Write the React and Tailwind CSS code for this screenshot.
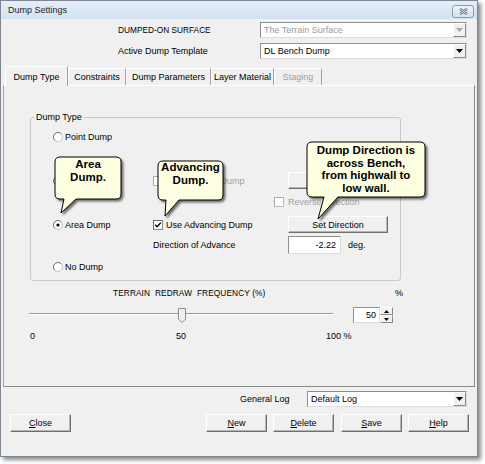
// App.jsx
import React from 'react';

const Radio = ({ checked }) => (
    <svg width="10" height="10" viewBox="0 0 10 10" className="shrink-0">
        <circle cx="5" cy="5" r="4.5" fill="#fff" stroke="#c4c4c4" />
        <path d="M1.8 8.2 A4.5 4.5 0 0 1 8.2 1.8" fill="none" stroke="#7a7a7a" />
        {checked && <circle cx="5" cy="5" r="1.6" fill="#000" />}
    </svg>
);

const Check = ({ checked, disabled }) => (
    <svg width="10" height="10" viewBox="0 0 10 10" className="shrink-0">
        <rect x="0.5" y="0.5" width="9" height="9" fill="#fff" stroke={disabled ? '#b9b9b9' : '#8a8a8a'} />
        <path d="M0.5 9.5 V0.5 H9.5" fill="none" stroke={disabled ? '#a8a8a8' : '#6a6a6a'} />
        {checked && <path d="M2.2 4.8 L4.1 6.8 L7.8 2.8" fill="none" stroke="#000" strokeWidth="1.4" />}
    </svg>
);

const DropArrow = ({ disabled }) => (
    <div className="w-[13px] h-full flex items-center justify-center bg-[#f0f0f0] border border-t-white border-l-white border-r-[#8a8a8a] border-b-[#8a8a8a]">
        <svg width="7" height="4" viewBox="0 0 7 4">
            <path d="M0 0H7L3.5 4Z" fill={disabled ? '#a8a8a8' : '#000'} />
        </svg>
    </div>
);

const Combo = ({ value, disabled, className = '' }) => (
    <div className={`h-[16px] flex bg-white border border-t-[#8f8f8f] border-l-[#8f8f8f] border-r-[#dcdcdc] border-b-[#dcdcdc] ${className}`}>
        <span className={`flex-1 pl-[3px] flex items-center ${disabled ? 'text-[#9a9a9a]' : 'text-black'}`}>{value}</span>
        <DropArrow disabled={disabled} />
    </div>
);

const Btn = ({ children, className = '' }) => (
    <div className={`flex items-center justify-center bg-[#f0f0f0] border border-t-white border-l-white border-r-[#6f6f6f] border-b-[#6f6f6f] shadow-[inset_-1px_-1px_0_#b4b4b4] ${className}`}>
        {children}
    </div>
);

const Tab = ({ label, active, disabled, className = '' }) => (
    <div
        className={`flex items-center justify-center border-t border-l border-r border-t-white border-l-white border-r-[#a0a0a0] bg-[#f0f0f0] ${
            active ? 'h-[20px] mb-[-1px] relative z-10' : 'h-[17px]'
        } ${disabled ? 'text-[#a0a0a0]' : 'text-black'} ${className}`}
    >
        {label}
    </div>
);

const callouts = [
    { x: 55, y: 157, w: 66, h: 42, tl: 64, tr: 76, tip: [61, 213] },
    { x: 158, y: 161, w: 65, h: 39, tl: 166, tr: 179, tip: [165, 216] },
    { x: 307, y: 142, w: 118, h: 55, tl: 324, tr: 338, tip: [318, 219] },
];

const shape = ({ x, y, w, h, tl, tr, tip }) => {
    const r = 5;
    return `M${x + r} ${y} H${x + w - r} Q${x + w} ${y} ${x + w} ${y + r} V${y + h - r} Q${x + w} ${y + h} ${x + w - r} ${y + h} H${tr} L${tip[0]} ${tip[1]} L${tl} ${y + h} H${x + r} Q${x} ${y + h} ${x} ${y + h - r} V${y + r} Q${x} ${y} ${x + r} ${y} Z`;
};

export default function App() {
    return (
        <div className="relative w-[485px] h-[464px] bg-white overflow-hidden font-['Liberation_Sans',Arial,sans-serif] text-[9px] leading-[10px] text-black">
            {/* Window */}
            <div className="w-[478px] h-[457px] flex flex-col border border-[#7d8794] bg-[#f0f0f0] shadow-[3px_3px_4px_rgba(0,0,0,0.45)]">
                {/* Title bar */}
                <div className="h-[18px] shrink-0 flex items-center justify-between pl-[7px] pr-[3px] bg-gradient-to-b from-[#e6eef8] to-[#d3e1f1]">
                    <span className="text-[#1e1e1e] text-[9px]">Dump Settings</span>
                    <div className="w-[22px] h-[13px] mt-[3px] rounded-[3px] border border-[#8b9cb4] bg-gradient-to-b from-[#eef3f9] to-[#d6e2ef] flex items-center justify-center">
                        <svg width="9" height="7" viewBox="0 0 9 7">
                            <path d="M1 0.8 L8 6.2 M8 0.8 L1 6.2" stroke="#5d6d83" strokeWidth="2.4" />
                            <path d="M1 0.8 L8 6.2 M8 0.8 L1 6.2" stroke="#eef3f9" strokeWidth="0.9" />
                        </svg>
                    </div>
                </div>

                {/* Body */}
                <div className="flex-1 flex flex-col">
                    <div className="flex items-center mt-[3px]">
                        <span className="w-[259px] pl-[117px] text-[8.3px]">DUMPED-ON SURFACE</span>
                        <Combo className="w-[207px]" value="The Terrain Surface" disabled />
                    </div>
                    <div className="flex items-center mt-[5px]">
                        <span className="w-[259px] pl-[117px]">Active Dump Template</span>
                        <Combo className="w-[207px]" value="DL Bench Dump" />
                    </div>

                    {/* Tabs */}
                    <div className="flex items-end h-[19px] mt-[7px] ml-[4px]">
                        <Tab label="Dump Type" active className="w-[63px]" />
                        <Tab label="Constraints" className="w-[58px]" />
                        <Tab label="Dump Parameters" className="w-[85px]" />
                        <Tab label="Layer Material" className="w-[63px]" />
                        <Tab label="Staging" disabled className="w-[48px]" />
                    </div>

                    {/* Tab panel */}
                    <div className="ml-[2px] w-[472px] h-[302px] shrink-0 flex flex-col border border-t-white border-l-[#a0a0a0] border-r-[#8a8a8a] border-b-[#8a8a8a]">
                        <fieldset className="ml-[26px] mt-[26px] w-[371px] h-[169px] border border-[#c9c9c9] rounded-[3px]">
                            <legend className="ml-[3px] px-[2px] leading-[10px]">Dump Type</legend>
                            <div className="pt-[8px]">
                                <div className="flex items-center h-[14px] pl-[22px]">
                                    <div className="flex items-center gap-[2px]">
                                        <Radio />
                                        <span>Point Dump</span>
                                    </div>
                                </div>

                                <div className="flex items-center h-[17px] mt-[28px] pl-[22px]">
                                    <div className="w-[100px] flex items-center gap-[2px]">
                                        <Radio />
                                        <span>Line Dump</span>
                                    </div>
                                    <div className="w-[135px] flex items-center gap-[3px] text-[#a0a0a0]">
                                        <Check disabled />
                                        <span>Use Stepped Dump</span>
                                    </div>
                                    <Btn className="w-[100px] h-[17px]" />
                                </div>

                                <div className="flex items-center h-[14px] mt-[6px] pl-[243px] gap-[4px] text-[#a0a0a0]">
                                    <Check disabled />
                                    <span>Reverse Direction</span>
                                </div>

                                <div className="flex items-center h-[17px] mt-[7px] pl-[22px]">
                                    <div className="w-[100px] flex items-center gap-[2px]">
                                        <Radio checked />
                                        <span>Area Dump</span>
                                    </div>
                                    <div className="w-[135px] flex items-center gap-[3px]">
                                        <Check checked />
                                        <span>Use Advancing Dump</span>
                                    </div>
                                    <Btn className="w-[100px] h-[17px]">Set Direction</Btn>
                                </div>

                                <div className="flex items-center h-[18px] mt-[3px] pl-[122px]">
                                    <span className="w-[135px]">Direction of Advance</span>
                                    <div className="w-[53px] h-[18px] flex items-center justify-end pr-[4px] bg-white border border-t-[#8f8f8f] border-l-[#8f8f8f] border-r-[#dcdcdc] border-b-[#dcdcdc]">
                                        -2.22
                                    </div>
                                    <span className="ml-[7px]">deg.</span>
                                </div>

                                <div className="flex items-center h-[14px] mt-[6px] pl-[22px]">
                                    <div className="flex items-center gap-[2px]">
                                        <Radio />
                                        <span>No Dump</span>
                                    </div>
                                </div>
                            </div>
                        </fieldset>

                        {/* Redraw frequency */}
                        <div className="flex items-center h-[10px] mt-[7px]">
                            <span className="w-[391px] pl-[109px] text-[8.3px] tracking-[0.1px]">TERRAIN&nbsp; REDRAW&nbsp; FREQUENCY (%)</span>
                            <span>%</span>
                        </div>
                        <div className="flex items-start h-[16px] mt-[9px]">
                            <div className="relative ml-[25px] w-[304px] h-[16px] pt-[6px]">
                                <div className="h-[2px] border-t border-t-[#9a9a9a] border-b border-b-white" />
                                <svg className="absolute left-[149px] top-[1px]" width="8" height="15" viewBox="0 0 8 15">
                                    <path d="M0.5 0.5 H7.5 V11 L4 14.5 L0.5 11 Z" fill="#f0f0f0" stroke="#8a8a8a" />
                                    <path d="M1.5 1.5 V10.5" stroke="#fff" />
                                </svg>
                            </div>
                            <div className="ml-[20px] flex h-[16px]">
                                <div className="w-[27px] h-[16px] flex items-center justify-end pr-[3px] bg-white border border-t-[#8f8f8f] border-l-[#8f8f8f] border-r-[#dcdcdc] border-b-[#dcdcdc]">
                                    50
                                </div>
                                <div className="w-[13px] h-[16px] flex flex-col">
                                    <div className="flex-1 flex items-center justify-center bg-[#f0f0f0] border border-t-white border-l-white border-r-[#8a8a8a] border-b-[#8a8a8a]">
                                        <svg width="5" height="3" viewBox="0 0 5 3"><path d="M0 3H5L2.5 0Z" fill="#000" /></svg>
                                    </div>
                                    <div className="flex-1 flex items-center justify-center bg-[#f0f0f0] border border-t-white border-l-white border-r-[#8a8a8a] border-b-[#8a8a8a]">
                                        <svg width="5" height="3" viewBox="0 0 5 3"><path d="M0 0H5L2.5 3Z" fill="#000" /></svg>
                                    </div>
                                </div>
                            </div>
                        </div>
                        <div className="flex items-center h-[10px] mt-[8px] pl-[26px]">
                            <span className="w-[146px]">0</span>
                            <span className="w-[150px]">50</span>
                            <span>100 %</span>
                        </div>
                    </div>

                    {/* Footer */}
                    <div className="flex items-center h-[16px] mt-[4px] pl-[239px]">
                        <span className="w-[67px]">General Log</span>
                        <Combo className="w-[160px]" value="Default Log" />
                    </div>
                    <div className="flex h-[18px] mt-[7px]">
                        <Btn className="ml-[9px] w-[61px] h-[18px]"><span><u>C</u>lose</span></Btn>
                        <Btn className="ml-[135px] w-[61px] h-[18px]"><span><u>N</u>ew</span></Btn>
                        <Btn className="ml-[6px] w-[61px] h-[18px]"><span><u>D</u>elete</span></Btn>
                        <Btn className="ml-[7px] w-[61px] h-[18px]"><span><u>S</u>ave</span></Btn>
                        <Btn className="ml-[6px] w-[61px] h-[18px]"><span><u>H</u>elp</span></Btn>
                    </div>
                </div>
            </div>

            {/* Callouts */}
            <svg className="absolute left-0 top-0 pointer-events-none drop-shadow-[2px_2px_1px_rgba(0,0,0,0.55)]" width="485" height="464">
                {callouts.map((c, i) => (
                    <path key={i} d={shape(c)} fill="#ffffe1" stroke="#000" strokeWidth="1" />
                ))}
            </svg>
            <div className="absolute left-[55px] top-[158px] w-[66px] text-center font-bold text-[11.5px] leading-[13px]">
                Area<br />Dump.
            </div>
            <div className="absolute left-[158px] top-[161px] w-[65px] text-center font-bold text-[11.5px] leading-[13px]">
                Advancing<br />Dump.
            </div>
            <div className="absolute left-[307px] top-[144px] w-[118px] text-center font-bold text-[11.5px] leading-[12.5px]">
                Dump Direction is<br />across Bench,<br />from highwall to<br />low wall.
            </div>
        </div>
    );
}
